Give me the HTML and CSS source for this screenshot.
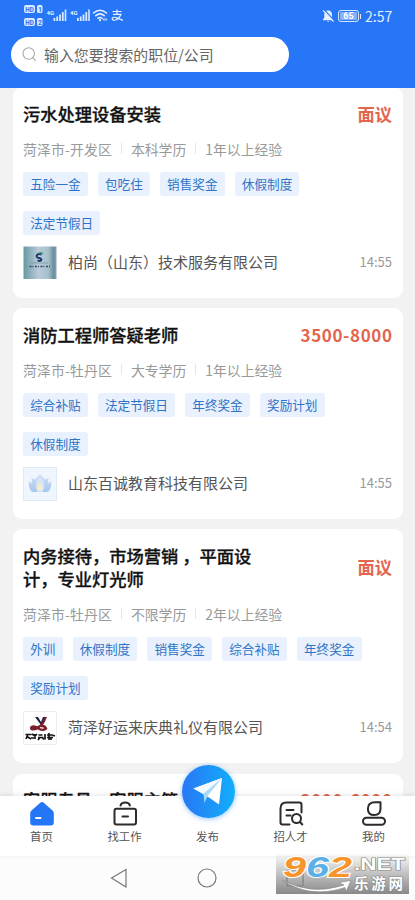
FILE: index.html
```html
<!DOCTYPE html>
<html lang="zh-CN">
<head>
<meta charset="utf-8">
<title>招聘</title>
<link rel="stylesheet" href="styles.css">
</head>
<body>
<div class="app">
  <header class="header">
    <div class="status">
      <svg class="status-icons" width="104" height="28" viewBox="0 0 104 28" fill="#d9e9ff">
        <rect x="0" y="1" width="11" height="8" rx="2"/><rect x="13" y="1" width="5.5" height="8" rx="1.5"/>
        <rect x="0" y="14" width="11" height="8" rx="2"/><rect x="13" y="14" width="5.5" height="8" rx="1.5"/>
        <g class="hd"><text x="1.2" y="7.5" textLength="8.6" lengthAdjust="spacingAndGlyphs">HD</text><text x="14" y="7.5">1</text><text x="1.2" y="20.5" textLength="8.6" lengthAdjust="spacingAndGlyphs">HD</text><text x="14" y="20.5">2</text></g>
        <g class="net"><text x="22.5" y="10.5">4G</text><text x="46" y="10.5">4G</text></g>
        <path d="M29.5 14h1.8v3h-1.8zM32.3 12.5h1.8V17h-1.8zM35.1 10.5h1.8V17h-1.8zM37.9 8h1.8v9h-1.8zM40.7 5.5h1.6V17h-1.6zM53 14h1.8v3H53zM55.8 12.5h1.8V17h-1.8zM58.6 10.5h1.8V17h-1.8zM61.4 8h1.8v9h-1.8zM64.2 5.5h1.6V17h-1.6z"/>
        <g fill="none" stroke="#e6f0ff" stroke-width="1.6" stroke-linecap="round"><path d="M69.5 9q6.500-5.500 13 0M71.800 11.700q4.200-3.500 8.400 0M74 14.200q2-1.500 4 0"/></g>
        <circle cx="76" cy="16" r="1.200"/><path d="M78.500 15.500l2-1.500v3zM83.500 15.500l-2-1.500v3z"/>
        <g fill="none" stroke="#e6f0ff" stroke-width="1.200"><path d="M88.500 7.500h9M93 5.500v4.500M89 10.300h8q-2 4.500-5.500 5.700c-2.500.8-4-.8-3-2.200 2-2 5 .6 10.500 2.600"/></g>
      </svg>
      <div class="status-right">
        <svg width="13" height="14" viewBox="0 0 13 14"><path d="M6 1.500c3 0 4 2 4 4.500v2.500l1.500 2v.8H1v-.8l1.300-2V6C2.300 3.500 3.500 1.500 6 1.500zM4.800 12h2.800q-1.400 1.600-2.800 0z" fill="#e6f0ff"/><path d="M2.300 1L12.600 12" stroke="#2676f7" stroke-width="1.200"/><path d="M1 1.300L11.500 12.500" stroke="#e6f0ff" stroke-width="1.200"/></svg>
        <span class="battery"><b>65</b></span>
        <span class="clock">2:57</span>
      </div>
    </div>
    <div class="search">
      <svg width="15" height="15" viewBox="0 0 15 15" fill="none" stroke="#aaa" stroke-width="1.100"><circle cx="6.700" cy="6.500" r="5.700"/><path d="M10.700 10.600l2.600 2.700" stroke-linecap="round"/></svg>
      <span>输入您要搜索的职位/公司</span>
    </div>
  </header>

  <main class="list">
    <article class="card">
      <div class="head"><h2>污水处理设备安装</h2><strong class="pay">面议</strong></div>
      <div class="meta"><span>菏泽市-开发区</span><span>本科学历</span><span>1年以上经验</span></div>
      <div class="tags"><i>五险一金</i><i>包吃住</i><i>销售奖金</i><i>休假制度</i><i>法定节假日</i></div>
      <div class="company">
        <svg class="logo" viewBox="0 0 34 34"><defs><linearGradient id="steel"><stop offset="0" stop-color="#67989f"/><stop offset=".45" stop-color="#b9cbdc"/><stop offset=".75" stop-color="#a5c0cb"/><stop offset=".92" stop-color="#6b8b9d"/><stop offset="1" stop-color="#8aa6b2"/></linearGradient></defs><path d="M.5.5h33v32.500H.5z" fill="url(#steel)"/><path d="M18.500 8.500c-5-2-6.500 3-2.500 3.500 4 .8 2.500 4-1.500 2.300" fill="none" stroke="#1d3566" stroke-width="2"/><path d="M16 7.500q2-2 4 .5" fill="none" stroke="#3aa06a" stroke-width="1.500"/><path d="M8 17h17" stroke="#6e8698" stroke-width=".6"/><path d="M6.500 20.500h22" stroke="#34455f" stroke-width="1.300" stroke-dasharray="2 1 1 1.500"/></svg>
        <span class="name">柏尚（山东）技术服务有限公司</span><time>14:55</time>
      </div>
    </article>

    <article class="card">
      <div class="head"><h2>消防工程师答疑老师</h2><strong class="pay num">3500-8000</strong></div>
      <div class="meta"><span>菏泽市-牡丹区</span><span>大专学历</span><span>1年以上经验</span></div>
      <div class="tags"><i>综合补贴</i><i>法定节假日</i><i>年终奖金</i><i>奖励计划</i><i>休假制度</i></div>
      <div class="company">
        <svg class="logo" viewBox="0 0 34 34"><defs><linearGradient id="lotus" x2="0" y2="1"><stop offset="0" stop-color="#cfe0f6"/><stop offset="1" stop-color="#a9c6ec"/></linearGradient></defs><path d="M.5.5h33v33H.5z" fill="#eff6fd" stroke="#dfebf6"/><path d="M6 14.500l3 2-.5-5.500 3.500 1.500L17 7l5 5.500 3.500-1.500-.5 5.500 3-2q1 6.500-3 10.500H9Q5 21 6 14.500z" fill="url(#lotus)"/><path d="M17 8q-7 9-2.500 17h5Q24 17 17 8z" fill="#d5e4f6"/><path d="M17 15q-4 5-1.500 8.500h3Q21 20 17 15z" fill="#f2ecc9"/></svg>
        <span class="name">山东百诚教育科技有限公司</span><time>14:55</time>
      </div>
    </article>

    <article class="card">
      <div class="head"><h2>内务接待，市场营销 ，平面设计，专业灯光师</h2><strong class="pay">面议</strong></div>
      <div class="meta"><span>菏泽市-牡丹区</span><span>不限学历</span><span>2年以上经验</span></div>
      <div class="tags"><i>外训</i><i>休假制度</i><i>销售奖金</i><i>综合补贴</i><i>年终奖金</i><i>奖励计划</i></div>
      <div class="company">
        <svg class="logo" viewBox="0 0 34 34"><path d="M.5.500h33v33H.5z" fill="#fff" stroke="#ececec"/><path d="M12 6h3l3 5 2-5h4l-6 8z" fill="#1d2145"/><path d="M22.500 6q-2 7-6 9.500-4 3.500-8 2.500-1.500-2 2-2.500 3 0 6 2.500 3.500 2 6.500-.5-1-3-5-2.500" fill="none" stroke="#7b1f2b" stroke-width="2.400"/><g fill="none" stroke="#151515" stroke-width="1.700"><path d="M2.500 23.500h6M5 23l-2 5M4 25.500l4 2.500M9 23l3 2 2-2M12 23v5M8 27h3M15.500 24h4M15 26.500h5.500M17 26.500l-2 2.500M19 26.500l2 2M22 23v5.500M24 24h5l3 1M26 22v7M24 26.500h6M28 26v3"/></g></svg>
        <span class="name">菏泽好运来庆典礼仪有限公司</span><time>14:54</time>
      </div>
    </article>

    <article class="card card-next">
      <div class="head"><h2>客服专员，客服主管</h2><strong class="pay num">3000-6000</strong></div>
    </article>
  </main>

  <nav class="tabbar">
    <div class="tab">
      <svg viewBox="0 0 26 26"><path d="M11.500 1.500q1.500-1 3 0l9 8q1.300 1 1.300 3v9q0 3-3 3H4.200q-3 0-3-3v-9q0-2 1.300-3z" fill="#2476f7"/><path d="M7 17h4.500" stroke="#fff" stroke-width="2" stroke-linecap="round"/></svg>
      <span>首页</span>
    </div>
    <div class="tab">
      <svg viewBox="0 0 26 26" fill="none" stroke="#2b2b2b" stroke-width="2" stroke-linecap="round"><rect x="2.500" y="7.700" width="21.500" height="15.800" rx="2"/><path d="M8.500 4.500q.8-3 4.700-3t4.700 3M10.500 15.500h5.500"/></svg>
      <span>找工作</span>
    </div>
    <div class="tab">
      <div class="publish"><svg width="32" height="30" viewBox="0 0 32 30"><path d="M1.500 11.500L30 1 27 27.500 17 20.500z" fill="#fff"/><path d="M1.500 11.500L30 1 11.500 16.500z" fill="#f3faff"/><path d="M11.500 16.500L30 1 15.500 19 12.500 26z" fill="#a9d9fb"/></svg></div>
      <span>发布</span>
    </div>
    <div class="tab">
      <svg viewBox="0 0 26 26" fill="none" stroke="#2b2b2b" stroke-width="2" stroke-linecap="round"><path d="M11.500 23.500H4.500q-2 0-2-2V7.500q0-6 6-6h13q2 0 2 2v8M8.500 9h7M8.500 14.500h4"/><circle cx="18.500" cy="17.500" r="4.500"/><path d="M22 21l2.300 2.500"/></svg>
      <span>招人才</span>
    </div>
    <div class="tab">
      <svg viewBox="0 0 26 26" fill="none" stroke="#2b2b2b" stroke-width="2"><path d="M19.500 1.200v6.500q0 6.300-6.300 6.300T6.900 7.700q0-6.500 7-6.500z" stroke-linejoin="round"/><rect x="2" y="16.700" width="22" height="7" rx="3.500"/></svg>
      <span>我的</span>
    </div>
  </nav>

  <footer class="sysnav">
    <svg width="18" height="20" viewBox="0 0 18 20"><path d="M16 1.500v17.500L1.500 10z"/></svg>
    <svg width="20" height="20" viewBox="0 0 20 20"><circle cx="10" cy="10" r="9"/></svg>
    <svg width="20" height="20" viewBox="0 0 20 20"><rect x="2" y="2" width="16" height="16" rx="1"/></svg>
  </footer>

  <div class="mark">
    <svg width="133" height="45" viewBox="0 -4 133 45">
      <path d="M6 27q30 16 62 5l-5-2.500 12-2-5 11-1-4Q34 46 6 27z" fill="#fff" stroke="#888" stroke-width=".6"/>
      <g class="digits"><text x="7" y="23.500" textLength="69" lengthAdjust="spacingAndGlyphs"><tspan fill="#f7942a">9</tspan><tspan fill="#5bb0e6">6</tspan><tspan fill="#f7942a">2</tspan></text></g>
      <text class="net-name" x="78" y="17" textLength="51" lengthAdjust="spacingAndGlyphs">.NET</text>
      <text class="site-name" x="78" y="36" textLength="49">乐游网</text>
    </svg>
  </div>
</div>
</body>
</html>
```
FILE: styles.css
```css
* { box-sizing: border-box; }
body { margin: 0; }
.app {
  position: relative;
  width: 415px;
  height: 900px;
  overflow: hidden;
  display: flex;
  flex-direction: column;
  background: #f2f2f2;
  font-family: "Noto Sans CJK SC", sans-serif;
}
.header {
  flex: none;
  height: 88px;
  background: #2676f7;
  z-index: 1;
}
.status {
  height: 37px;
  padding: 4px 24px 0 24px;
  display: flex;
  justify-content: space-between;
}
.status-icons text { font-family: Roboto, sans-serif; font-weight: 700; }
.hd text { font-size: 7px; fill: #2676f7; }
.net text { font-size: 6px; fill: #e6f0ff; }
.status-right { display: flex; align-items: center; height: 24px; color: #e3eeff; }
.battery {
  position: relative;
  margin-left: 3px;
  width: 21px;
  height: 12px;
  padding: 1px;
  border: 1px solid #d9e8ff;
  border-radius: 3px;
  display: flex;
}
.battery b {
  flex: 1;
  background: #86b1fb;
  border-radius: 1px;
  font: 700 9px/8.5px Roboto, sans-serif;
  text-align: center;
  color: #fff;
}
.battery::after {
  content: "";
  position: absolute;
  left: 20.5px;
  top: 3px;
  width: 1.5px;
  height: 5px;
  background: #d9e8ff;
}
.clock { margin-left: 6px; width: 26px; font-size: 14px; line-height: 24px; white-space: nowrap; }
.search {
  margin-left: 11px;
  width: 277.5px;
  height: 35px;
  border-radius: 18px;
  background: #fff;
  display: flex;
  align-items: center;
  padding-left: 11px;
  gap: 7px;
  font-size: 14.9px;
  color: #666;
}
.search span { line-height: 35px; }
.list {
  flex: none;
  height: 709px;
  overflow: hidden;
  margin-top: -1px;
  padding: 0 12px 0 12.5px;
  display: flex;
  flex-direction: column;
  gap: 10.2px;
}
.card {
  flex: none;
  padding: 14.5px 11px 18.5px 10.5px;
  border-radius: 9px;
  background: #fff;
}
.card-next { height: 120px; }
.head { display: flex; justify-content: space-between; align-items: center; }
.head h2 {
  margin: 0;
  width: 240px;
  font-size: 17.25px;
  line-height: 23px;
  font-weight: 500;
  -webkit-text-stroke: .3px #111;
  color: #111;
}
.pay { font-size: 17.25px; line-height: 23px; font-weight: 700; color: #e4654d; }
.pay.num { font-size: 17px; letter-spacing: .62px; margin-right: -.62px; }
.meta {
  margin-top: 14px;
  height: 20px;
  display: flex;
  align-items: center;
  font-size: 13.85px;
  line-height: 20px;
  color: #999;
}
.meta span:first-child { letter-spacing: .15px; }
.meta span + span { display: flex; align-items: center; }
.meta span + span::before {
  content: "";
  width: 1px;
  height: 11px;
  margin: 0 9px;
  background: #e6e6e6;
}
.tags { margin-top: 13.5px; padding-right: 25px; display: flex; flex-wrap: wrap; gap: 15px 10px; }
.tags i {
  height: 24px;
  padding: 0 7.2px;
  border-radius: 3px;
  background: #e8f1fd;
  font-style: normal;
  font-size: 12.6px;
  line-height: 23.5px;
  color: #2f73c6;
}
.company { margin-top: 10.5px; height: 34px; display: flex; align-items: center; }
.logo { width: 34px; height: 34px; flex: none; }
.name { margin-left: 11px; padding-bottom: 2px; font-size: 15px; line-height: 30px; color: #555; }
.company time { margin-left: auto; padding-bottom: 2px; font-size: 13px; color: #999; }
.tabbar {
  flex: none;
  height: 60px;
  background: #fff;
  box-shadow: 0 -1px 5px rgba(0, 0, 0, .1);
  display: grid;
  grid-template-columns: repeat(5, 1fr);
  z-index: 1;
}
.tab { position: relative; display: flex; flex-direction: column; align-items: center; padding-top: 5px; }
.tab > svg { width: 26px; height: 26px; }
.tab span { margin-top: auto; margin-bottom: 11px; font-size: 11.4px; line-height: 18px; color: #555; }
.publish {
  position: absolute;
  left: 15.5px;
  top: -31px;
  width: 53px;
  height: 53px;
  border-radius: 50%;
  background: linear-gradient(90deg, #2878f4, #12aefc);
  box-shadow: 0 1px 5px rgba(24, 140, 255, .5);
  display: flex;
  align-items: center;
  justify-content: center;
}
.sysnav {
  flex: 1;
  background: #fcfcfc;
  display: flex;
  align-items: center;
  justify-content: space-between;
  padding: 0 110px;
}
.sysnav svg { fill: none; stroke: #777; stroke-width: 1.2; }
.sysnav svg:last-child { margin-right: 0; }
.mark {
  position: absolute;
  left: 276px;
  top: 849px;
  width: 133px;
  height: 45px;
  z-index: 2;
  background: linear-gradient(rgba(170, 170, 170, 0) 4px, rgba(130, 130, 130, .95));
}
.mark svg { display: block; }
.digits text {
  font: italic 700 29px "Liberation Sans", sans-serif;
  stroke: #fff;
  stroke-width: 2px;
  paint-order: stroke;
}
.net-name, .site-name { fill: #fff; stroke: #888; stroke-width: 1.2px; paint-order: stroke; }
.net-name { font: 700 16px "Liberation Sans", sans-serif; }
.site-name { font: 700 14.5px "Noto Sans CJK SC", sans-serif; }
```
